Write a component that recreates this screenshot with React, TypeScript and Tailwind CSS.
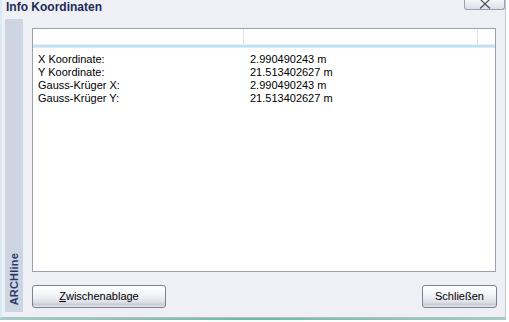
const ROWS: [string, string][] = [
  ["X Koordinate:", "2.990490243 m"],
  ["Y Koordinate:", "21.513402627 m"],
  ["Gauss-Krüger X:", "2.990490243 m"],
  ["Gauss-Krüger Y:", "21.513402627 m"],
];

function WinButton({ children, className }: { children: React.ReactNode; className: string }) {
  return (
    <button
      className={`h-[23px] rounded-[3px] border border-[#7c8192] bg-[linear-gradient(#ffffff_0%,#f4f5f8_40%,#dfe1e8_75%,#c9ccd6_88%,#e6e7ec_100%)] text-[11px] text-black ${className}`}
    >
      {children}
    </button>
  );
}

export default function App() {
  return (
    <div className="h-[322px] w-[509px] bg-white font-['Liberation_Sans',Arial,sans-serif]">
      <div className="flex h-[318px] w-[506px] flex-col border-r border-b border-l-2 border-r-[#c3c7d2] border-b-[#b9bdc8] border-l-[#d8eaf3] bg-[#eef0f5]">
        {/* title bar */}
        <div className="flex h-[19px] items-start justify-between">
          <div className="pl-[4px] text-[12px] font-bold leading-[14px] text-[#1d2b55]">Info Koordinaten</div>
          <div className="mr-[0px] h-[10px] w-[41px] rounded-b-[3px] border-x border-b border-[#9a9eac] bg-[linear-gradient(#f6f7f9,#dcdfe6)]">
            <svg width="39" height="9" viewBox="0 0 39 9">
              <path d="M15 -1 L20 4 L25 -1 M20 4 L15 8.5 M20 4 L25 8.5" stroke="#4a4f60" strokeWidth="1.2" fill="none" />
            </svg>
          </div>
        </div>

        {/* body */}
        <div className="flex flex-1">
          <div className="ml-[3px] flex h-[293px] w-[18px] items-end justify-center bg-[#cdd5e2] pb-[7px]">
            <span className="[writing-mode:vertical-rl] rotate-180 text-[11px] font-bold leading-[18px] tracking-[0.2px] text-[#2b3a66]">
              ARCHline
            </span>
          </div>

          <div className="ml-[9px] flex flex-col">
            {/* list */}
            <div className="mt-[9px] h-[244px] w-[464px] border border-[#9a9eae] bg-white">
              <div className="flex h-[19px] flex-col">
                <div className="flex h-[15px]">
                  <div className="w-[211px] border-r border-[#e1e3e8]" />
                  <div className="w-[234px] border-r border-[#e1e3e8]" />
                  <div className="flex-1" />
                </div>
                <div className="h-[1px] bg-[#e4f1f8]" />
                <div className="h-[2px] bg-[#c1e0f0]" />
                <div className="h-[1px] bg-[#d9ecf5]" />
              </div>
              <div className="pt-[5px] text-[11px] leading-[13px] text-black">
                {ROWS.map(([k, v]) => (
                  <div key={k} className="flex">
                    <div className="w-[211px] pl-[5px]">{k}</div>
                    <div className="pl-[6px]">{v}</div>
                  </div>
                ))}
              </div>
            </div>

            {/* buttons */}
            <div className="mt-[13px] flex justify-between">
              <WinButton className="w-[134px]">
                <span className="underline underline-offset-[1px]">Z</span>wischenablage
              </WinButton>
              <WinButton className="mr-[-1px] w-[75px]">Schließen</WinButton>
            </div>
          </div>
        </div>
      </div>
      <div className="h-[2px] w-[506px] bg-[linear-gradient(90deg,#9fd0c4,#6fb7a6_50%,#9fd0c4)]" />
    </div>
  );
}
